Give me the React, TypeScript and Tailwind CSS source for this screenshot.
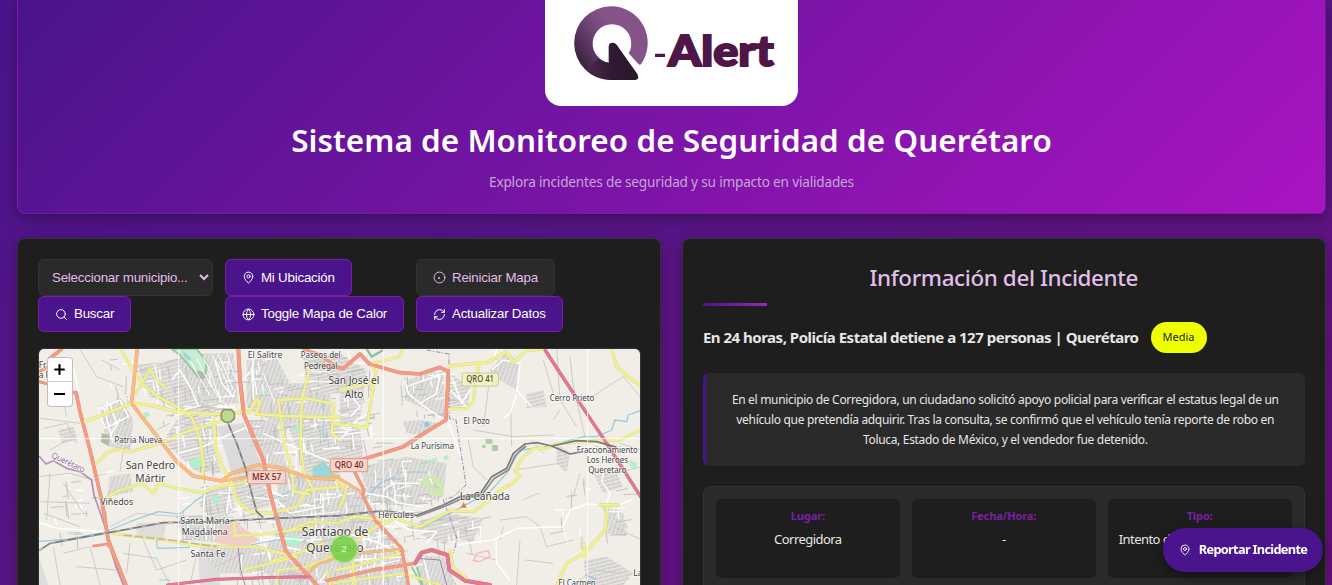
import React from "react";
import { Circle, Globe, MapPin, Plus, RefreshCw, Search } from "lucide-react";

type Road = { d: string; c: string; w: number };

const YELLOW = "#f1f193";
const YELLOW_CASE = "#d6d67c";
const ORANGE = "#fabb84";
const RED = "#f59c84";
const PINK = "#e27a92";

const roadsWest: Road[] = [
  { d: "M272 27 L300 75 L340 135 L385 170 L440 200 L485 232 L510 295 L520 375 L518 408", c: YELLOW, w: 9 },
  { d: "M360 85 L375 115 L410 148 M318 160 L362 85", c: YELLOW, w: 8 },
  { d: "M162 246 L225 222 L308 188 L380 200 L450 218 L560 222 L660 215 L678 178 L690 185 L678 222 L760 228 L930 232", c: YELLOW, w: 10 },
  { d: "M192 376 L235 335 L265 328 L300 336 L395 308 L470 275 L560 248 L590 232", c: YELLOW, w: 9 },
  { d: "M220 478 L270 450 L335 430 L370 460 L388 430 L440 445 L520 458 L560 440 L640 428 L655 415", c: YELLOW, w: 9 },
  { d: "M552 240 L558 330 L580 385 L605 430 L620 480 L660 515 L720 520 L800 500 L830 450 L930 440", c: YELLOW, w: 9 },
  { d: "M838 90 L815 180 L812 320 L822 400 L845 440 M745 180 L830 175 L912 192 L905 280 L930 300 M745 180 L765 320 L785 390 L792 455 L838 462", c: YELLOW, w: 9 },
  { d: "M248 580 L400 600 L520 620 L680 620 L800 650 L640 690", c: YELLOW, w: 8 },
  { d: "M612 545 L615 588 L700 582 L780 572 L850 560 M740 735 L745 690 L830 680 L930 640", c: YELLOW, w: 8 },
  { d: "M780 570 L840 545 L930 550 M720 665 L800 640 L880 610 M900 735 L890 690", c: YELLOW, w: 8 },
  { d: "M322 27 L312 120 L305 190 L370 275 L440 365 L490 408 L575 423 L605 400 L685 375 L745 382 L840 414 L930 418", c: ORANGE, w: 11 },
  { d: "M575 423 L650 412 M835 700 L865 670 L930 650", c: ORANGE, w: 9 },
  { d: "M27 125 L85 140 L138 160 M27 95 L55 80", c: RED, w: 9 },
  { d: "M60 55 L95 27 M138 158 L150 215 L180 330 L215 480 L235 600 L258 660 L288 735", c: RED, w: 11 },
  { d: "M190 618 L232 612 L252 640", c: RED, w: 7 },
  { d: "M625 27 L630 120 L642 225 L700 360 L720 460 L745 550 L768 635 L838 710 L860 735", c: RED, w: 12 },
  { d: "M820 27 L860 40 L930 85", c: RED, w: 8 },
  { d: "M412 735 L560 718 L740 712 L840 710", c: PINK, w: 9 },
];

const roadsEast: Road[] = [
  { d: "M100 70 L180 50 L187 27 M95 75 L108 95 L80 262 L-20 250 M0 148 L95 130", c: YELLOW, w: 9 },
  { d: "M328 78 L400 70 L440 68 L500 35 L520 68 L560 30 L615 27", c: YELLOW, w: 10 },
  { d: "M418 72 L408 120 L400 185 L380 205 L325 208", c: YELLOW, w: 9 },
  { d: "M815 27 L830 80 L870 115 L905 138", c: YELLOW, w: 10 },
  { d: "M905 268 L840 300 L760 302 L650 312 L620 325 L580 325 L545 355 L525 395 L540 405 L520 430 L480 450 L450 480 L400 515 L330 512 L240 560 L165 535 L100 565 L0 640", c: YELLOW, w: 9 },
  { d: "M-10 420 L20 450 L0 500 M0 545 L45 530 L130 540 M-10 690 L40 680 L180 640 M35 640 L45 735", c: YELLOW, w: 9 },
  { d: "M780 495 L835 495 M803 495 L795 570 L740 635 L680 670 L650 735 M730 612 L735 650", c: YELLOW, w: 10 },
  { d: "M330 630 L340 680 L380 715 M-20 730 L190 700 L300 735", c: YELLOW, w: 8 },
  { d: "M-20 405 L30 435 L70 460", c: ORANGE, w: 9 },
  { d: "M0 650 L60 638 L185 628", c: ORANGE, w: 9 },
  { d: "M-60 75 L10 85 L60 42 L88 72 L180 98 L240 102 L300 82 L325 95 L318 240 L260 275 L190 320 L70 358 L0 360", c: RED, w: 11 },
  { d: "M45 398 L72 450 L68 465 L105 540 L185 625 L205 735", c: RED, w: 10 },
  { d: "M615 30 L720 190 L800 310 L905 475", c: PINK, w: 10 },
  { d: "M-40 722 L100 690 L225 670 L245 638", c: RED, w: 10 },
  { d: "M225 670 L245 638 L275 630 L322 645 L328 690 L375 722 L450 735", c: PINK, w: 12 },
];

const whiteWest =
  "M205 205 L270 180 L295 230 L225 265 Z M222 205 L250 310 M240 192 L260 250 M130 80 L145 155 M270 235 L240 290 M450 90 L485 150 L505 200 M450 90 L425 120 M445 340 L520 320 L560 300 L650 262 M555 60 L575 130 L610 170 M668 27 L670 180 M640 120 L660 95 M700 280 L790 320 L900 365 M27 548 L80 565 L220 575 M525 440 L520 520 L530 600 M730 340 L800 335 M600 440 L590 520 M880 460 L878 560 L850 600 M700 590 L820 600 M760 620 L860 640 M650 470 L740 480 L780 520 L880 500 M700 440 L760 470 M860 735 L890 700";
const whiteEast =
  "M200 140 L240 125 L300 105 L290 160 L240 190 L205 160 Z M240 190 L305 235 M335 110 L365 190 L390 150 M330 150 L380 200 M455 90 L490 60 L540 70 L530 150 L575 200 M530 165 L510 220 L490 235 M320 235 L345 300 L360 345 M790 400 L785 425 L810 460 L800 490 M345 615 L460 600 L530 565 L670 560 L690 510 L740 492 L780 495 M835 495 L875 480 M468 600 L470 670 L510 720 M130 450 L160 430 L240 430 M75 460 L140 470 L180 490 L250 500 M160 540 L210 570 L290 575 L260 610 M20 580 L120 610 L180 640 M40 660 L200 650 M120 570 L100 690 M75 590 L60 700 M250 650 L270 735 M460 60 L470 27 M0 300 L50 240 L90 220 M20 150 L60 200 L30 230";

const minorWest =
  "M60 60 L90 150 L65 190 M95 70 L130 85 M150 27 L200 110 L280 140 M215 60 L270 90 M30 235 L150 250 M40 265 L110 250 L140 310 M60 330 L130 290 M27 410 L120 400 L190 420 M60 400 L50 540 M100 430 L160 520 M27 485 L180 490 M40 520 L150 560 M70 620 L90 735 M100 640 L180 620 L210 735 M140 680 L260 690 M280 640 L380 655 L420 735 M300 610 L290 700 M330 290 L280 330 L270 395 M190 410 L230 400 M420 250 L380 270 M240 560 L320 520 L450 530 M340 600 L380 690 L470 660 M500 640 L480 735 M560 680 L640 640 M690 630 L700 735 M660 320 L780 300 M100 180 L110 230";
const minorEast =
  "M450 110 L430 260 M400 270 L520 290 L640 285 M512 210 L515 320 M610 60 L640 160 M650 27 L660 180 L710 260 M690 50 L700 140 L735 290 M660 210 L640 240 M575 300 L610 340 M385 300 L400 380 L440 420 M480 540 L560 530 L600 560 M550 480 L580 465 L600 460 M540 600 L530 735 M555 660 L640 670 M380 640 L470 660 M600 560 L620 620 L700 600 M720 400 L700 470 M840 310 L905 330 M830 400 L905 380 M820 560 L905 600 M700 735 L760 690 L840 700 M740 180 L850 110 L900 170 M520 390 L660 370 M490 560 L480 600";

const urbanWest = [
  "M205 200 L275 175 L310 240 L300 330 L235 320 Z",
  "M320 75 L440 60 L520 130 L545 220 L450 210 L360 170 Z",
  "M440 60 L480 40 L610 40 L625 190 L520 190 Z",
  "M450 225 L545 230 L550 320 L575 400 L500 395 L450 350 L400 300 Z",
  "M240 410 L300 400 L310 455 L230 470 Z",
  "M520 450 L600 440 L620 515 L550 535 L510 500 Z",
  "M650 60 L740 55 L780 130 L900 130 L905 250 L830 280 L735 250 L650 200 Z",
  "M820 50 L930 40 L930 160 L830 165 Z",
  "M660 240 L740 240 L770 380 L700 370 L650 280 Z",
  "M610 390 L700 380 L720 500 L640 515 L605 440 Z",
  "M740 390 L930 420 L930 735 L720 735 L700 640 L745 560 Z",
  "M770 250 L930 250 L930 415 L830 400 Z",
  "M435 525 L610 530 L610 610 L470 600 Z",
  "M85 270 L130 260 L145 300 L95 310 Z",
  "M500 610 L740 630 L760 700 L560 700 Z",
];
const urbanEast = [
  "M0 40 L80 90 L60 240 L0 260 Z",
  "M200 120 L310 85 L315 235 L240 200 L195 180 Z",
  "M330 100 L390 140 L385 195 L330 200 Z",
  "M450 90 L500 35 L540 70 L530 150 L460 110 Z",
  "M560 160 L610 150 L620 200 L560 205 Z",
  "M60 380 L200 350 L320 370 L310 470 L220 500 L90 490 Z",
  "M0 270 L60 260 L70 350 L0 355 Z",
  "M0 430 L60 450 L130 560 L180 640 L200 735 L0 735 Z",
  "M190 560 L320 520 L430 535 L400 600 L290 605 Z",
  "M790 500 L850 520 L860 590 L800 580 Z",
  "M650 310 L690 340 L680 400 L650 370 Z",
  "M230 645 L310 650 L350 735 L240 735 Z",
  "M730 660 L800 650 L880 700 L850 735 L740 735 Z",
  "M190 245 L240 240 L300 250 L250 285 L200 280 Z",
  "M760 400 L830 400 L850 440 L790 460 Z",
];

// Scattered side streets: [left, top, width, height, count] per neighbourhood.
const blocks: number[][] = [
  [210, 60, 400, 160, 70],
  [400, 220, 160, 180, 40],
  [640, 50, 290, 340, 110],
  [620, 400, 310, 330, 110],
  [930, 30, 110, 330, 40],
  [930, 420, 200, 310, 70],
  [1000, 360, 240, 140, 45],
  [1110, 90, 140, 140, 30],
  [1120, 530, 240, 80, 30],
  [440, 430, 170, 170, 40],
  [1560, 380, 230, 220, 22],
  [40, 400, 190, 200, 22],
];

function sideStreets() {
  let seed = 7;
  const next = () => {
    seed = (seed * 16807) % 2147483647;
    return seed / 2147483647;
  };
  const parts: string[] = [];
  for (const [x, y, w, h, n] of blocks) {
    for (let i = 0; i < n; i++) {
      const px = x + next() * w;
      const py = y + next() * h;
      const angle = -0.25 + (i % 2) * 1.57 + next() * 0.3;
      const len = 14 + next() * 40;
      parts.push(`M${px.toFixed(0)} ${py.toFixed(0)}l${(Math.cos(angle) * len).toFixed(0)} ${(Math.sin(angle) * len).toFixed(0)}`);
    }
  }
  return parts;
}

const streets = sideStreets();
const greyStreets = streets.filter((_, i) => i % 3 !== 0).join("");
const whiteStreets = streets.filter((_, i) => i % 3 === 0).join("");

const labels: { t: string; x: number; y: number; w: number; s: number }[] = [
  { t: "El Salitre", x: 705, y: 53, w: 104, s: 25 },
  { t: "Paseos del", x: 872, y: 55, w: 120, s: 24 },
  { t: "Pedregal", x: 872, y: 86, w: 100, s: 24 },
  { t: "San José el", x: 972, y: 132, w: 153, s: 30 },
  { t: "Alto", x: 972, y: 173, w: 56, s: 30 },
  { t: "Patria Nueva", x: 325, y: 308, w: 143, s: 24 },
  { t: "San Pedro", x: 361, y: 386, w: 148, s: 30 },
  { t: "Mártir", x: 361, y: 426, w: 90, s: 30 },
  { t: "Viñedos", x: 260, y: 494, w: 99, s: 27 },
  { t: "Santa María", x: 525, y: 551, w: 148, s: 26 },
  { t: "Magdalena", x: 524, y: 585, w: 138, s: 26 },
  { t: "Santa Fe", x: 534, y: 651, w: 105, s: 26 },
  { t: "Santiago de", x: 915, y: 588, w: 200, s: 36 },
  { t: "Querétaro", x: 915, y: 636, w: 172, s: 36 },
  { t: "Cerro Prieto", x: 1626, y: 183, w: 134, s: 24 },
  { t: "El Pozo", x: 1340, y: 253, w: 79, s: 24 },
  { t: "La Purísima", x: 1207, y: 326, w: 130, s: 25 },
  { t: "Fraccionamiento", x: 1732, y: 338, w: 183, s: 24 },
  { t: "Los Heroes", x: 1732, y: 369, w: 124, s: 24 },
  { t: "Queretaro", x: 1732, y: 400, w: 115, s: 24 },
  { t: "La Cañada", x: 1364, y: 480, w: 150, s: 30 },
  { t: "Hércules", x: 1098, y: 534, w: 107, s: 26 },
  { t: "El Carmen", x: 1641, y: 739, w: 112, s: 25 },
  { t: "La", x: 1824, y: 707, w: 28, s: 25 },
];

function Roads({ roads }: { roads: Road[] }) {
  return (
    <g fill="none" strokeLinejoin="round" strokeLinecap="round">
      {roads.map((r, i) => (
        <path key={`c${i}`} d={r.d} stroke={r.c === YELLOW ? YELLOW_CASE : r.c === ORANGE ? "#dba56c" : r.c === RED ? "#e2856c" : "#cd6079"} strokeWidth={r.w} />
      ))}
      {roads.map((r, i) => (
        <path key={i} d={r.d} stroke={r.c} strokeWidth={r.w - 2} />
      ))}
    </g>
  );
}

function Shield({ x, y, w, text, yellow }: { x: number; y: number; w: number; text: string; yellow?: boolean }) {
  return (
    <g>
      <rect x={x} y={y} width={w} height={39} rx={5} fill={yellow ? "#f1f1c6" : "#f6d3cb"} stroke={yellow ? "#c8c88e" : "#dd9c90"} strokeWidth={3} />
      <text x={x + w / 2} y={y + 28} fontSize={24} textAnchor="middle" fill={yellow ? "#50501e" : "#7a2018"} textLength={w - 26} lengthAdjust="spacingAndGlyphs" fontWeight={500}>
        {text}
      </text>
    </g>
  );
}

function CityMap() {
  return (
    <svg viewBox="27 27 1803 711" className="block h-[237px] w-[601px]" fontFamily="'Noto Sans', sans-serif">
      <defs>
        <pattern id="streetsA" width="15" height="11" patternUnits="userSpaceOnUse" patternTransform="rotate(-14)">
          <rect width="15" height="11" fill="#e0dedb" />
          <path d="M0 1H15M2 0V11M9 1V7" stroke="#c9c8c6" strokeWidth="2.2" />
          <path d="M0 7H15" stroke="#f4f3f1" strokeWidth="1.6" />
        </pattern>
        <pattern id="streetsB" width="12" height="16" patternUnits="userSpaceOnUse" patternTransform="rotate(19)">
          <rect width="12" height="16" fill="#e0dedb" />
          <path d="M0 2H12M3 0V16M3 10H12" stroke="#c8c7c5" strokeWidth="2.2" />
          <path d="M8 0V16" stroke="#f4f3f1" strokeWidth="1.6" />
        </pattern>
      </defs>
      <rect x="27" y="27" width="1803" height="711" fill="#f1eee8" />

      <g>
        <path d="M320 548 H410 L400 600 L320 585 Z M505 630 L570 625 L570 735 H510 Z M27 650 L55 735 H27 Z" fill="#dedddc" />
        <path d="M790 400 L900 400 L900 470 L800 480 Z" fill="#dbdbdb" />
      </g>
      {urbanWest.map((d, i) => (
        <path key={i} d={d} fill={i % 2 ? "url(#streetsA)" : "url(#streetsB)"} />
      ))}
      <g transform="translate(930 0)">
        {urbanEast.map((d, i) => (
          <path key={i} d={d} fill={i % 2 ? "url(#streetsB)" : "url(#streetsA)"} />
        ))}
      </g>
      <path d={greyStreets} fill="none" stroke="#bfbdba" strokeWidth="2.6" />
      <path d={whiteStreets} fill="none" stroke="#fdfdfc" strokeWidth="4" />
      <path d="M562 260 L640 248 L692 368 L605 400 Z" fill="#dbdbdb" />
      <path d="M555 570 L615 545 L690 600 L640 620 L560 610 Z" fill="#f0cfc9" />

      <g>
        <path d="M425 27 L500 27 L530 65 L525 110 L508 115 L480 80 L450 45 Z" fill="#c9ecd0" stroke="#8cc79a" strokeWidth="5" />
        <path d="M455 30 L480 50 L488 68 L465 55 Z" fill="#9fd4e2" />
        <path d="M478 362 L512 345 L520 375 L490 388 Z M545 465 L565 468 L562 490 L550 492 Z M765 590 L800 582 L818 605 L790 620 L765 610 Z M340 220 l15 -5 4 12 -14 6z M795 260 l14 0 0 18 -14 0z M700 150 l10 10 -8 10z" fill="#b2f0cd" />
        <path d="M850 385 L880 368 L905 395 L905 408 L850 408 Z" fill="#9fd6dd" stroke="#92dcb0" strokeWidth="4" />
        <path d="M215 280 L240 285 L235 318 L212 305 Z M500 90 l26 8 -8 20 -18 -6z" fill="#b4b9a5" />
        <path d="M1170 430 L1190 400 L1210 450 Z M1190 455 L1235 440 L1240 470 L1200 465 Z M1195 405 L1225 415 L1245 445 L1222 440 Z" fill="#cdeab0" />
        <path d="M1367 295 h20 v16 h-20z M1386 315 h18 v18 h-18z M1357 315 h9 v9 h-9z" fill="#a9cf9f" />
        <path d="M1190 360 l30 -6 2 8 -30 6z M1240 350 l14 -5 3 12 -14 4z M1170 380 l8 0 0 14 -8 0z M1800 360 l22 10 -4 18 -20 -10z M1115 180 l6 12 -8 8z" fill="#b8efc8" />
        <path d="M1183 250 q8 -12 14 0 q2 12 -7 12 q-9 0 -7 -12z" fill="#90c8e0" />
        <path d="M1010 27 L1025 50 L1060 30" fill="none" stroke="#8fbf98" strokeWidth="7" />
        <path d="M1145 680 L1175 735 M1160 680 L1178 735" stroke="#9cc79f" strokeWidth="6" />
      </g>

      <g fill="none" stroke="#c6c4c1" strokeWidth="2.5" strokeLinejoin="round">
        <path d={minorWest} />
        <path d={minorEast} transform="translate(930 0)" />
      </g>
      <g fill="none" stroke="#98cbdd" strokeWidth="3.5" strokeLinejoin="round">
        <path d="M27 604 L110 598 L220 578 L300 545 L385 515 L450 522 L500 480 L560 440" />
        <path d="M380 600 L382 625 L480 622 M650 470 L720 480 L780 455 M388 720 L420 720 M660 615 L740 600 M878 180 L880 290" />
        <path d="M1180 560 L1260 520 L1380 455 L1430 400 L1470 330 L1540 322 L1660 290 L1700 290 L1745 270 L1755 240 L1790 245 L1795 225 L1830 212" strokeWidth="4" />
        <path d="M1000 480 L1050 430 L1095 410 M1665 705 L1700 718" strokeWidth="5" />
      </g>
      <g fill="none" stroke="#fff" strokeWidth="4.5" strokeLinejoin="round">
        <path d={whiteWest} />
        <path d={whiteEast} transform="translate(930 0)" />
      </g>
      <g fill="none" stroke="#fff" strokeWidth="3">
        <path d="M480 60 Q510 120 540 165 M500 55 Q540 140 580 190 M520 50 Q550 110 560 155 Q575 185 590 165 M545 45 Q585 100 600 160 Q610 180 615 150 M565 42 L610 150 M590 40 L618 120" />
        <path d="M830 95 H900 M840 125 H920 M700 100 L735 190 M940 610 L1100 580 M960 640 L1110 610 M980 690 L1110 660 M1000 580 L1020 735 M1050 575 L1060 735 M960 680 L970 735 M760 650 L830 690 M850 480 L930 470 M790 530 L930 515 M850 440 L860 580" />
      </g>
      <path d="M1340 640 L1375 632 L1380 650 L1350 665 L1330 662 Z" fill="none" stroke="#f7b5c5" strokeWidth="4" />

      <g fill="none" stroke="#a383ad" strokeLinejoin="round">
        <path d="M27 348 L48 372 L70 362 L110 385 L150 395 L185 420 L192 465 L208 510 L225 560 L240 620 L258 680 L280 735" strokeWidth="5" opacity="0.85" />
        <path d="M1190 30 L1257 42 L1258 235 L1278 240 L1290 320 L1300 380 L1308 435 L1270 470 L1240 480 L1262 540 L1282 600 L1270 640" strokeWidth="3" strokeDasharray="14 5 4 5" />
        <path d="M624 615 L632 690 L645 735 M1160 655 L1230 660 L1250 735" strokeWidth="3" />
      </g>

      <Roads roads={roadsWest} />
      <g transform="translate(930 0)">
        <Roads roads={roadsEast} />
      </g>
      <path d="M280 585 L420 600 L560 620" fill="none" stroke="#c8b890" strokeWidth="5" strokeDasharray="26 8" />

      <g fill="none" strokeLinejoin="round">
        <path d="M27 632 L60 610 L170 590 L290 568 L400 548 L520 546 L720 536 L930 527 L1060 512 L1160 526 L1240 495 L1290 470 L1350 462 L1385 410 L1430 385 L1450 340 L1485 312 L1520 308 L1565 318 L1620 342 L1660 335 M1565 318 L1640 302 L1700 305 L1760 322" stroke="#7b7b7b" strokeWidth="5" />
        <path d="M27 632 L60 610 L170 590 L290 568 L400 548 L520 546 L720 536 L930 527 L1060 512 L1160 526" stroke="#c4c4c4" strokeWidth="3" strokeDasharray="14 26" />
        <path d="M1160 530 L1245 499 L1295 476 L1355 466 L1392 416 L1436 389 L1456 346 L1488 318" stroke="#8b8b8b" strokeWidth="5" />
        <path d="M592 245 L620 310 L645 380 L665 460 L680 515 L700 533" stroke="#777" strokeWidth="5" />
        <path d="M592 245 L620 310 L645 380 L665 460 L680 515" stroke="#bbb" strokeWidth="3" strokeDasharray="10 20" />
      </g>

      <path d="M446 27 V738 M1060 27 V738 M1673 27 V738 M27 296 H1830" stroke="#fff" strokeWidth="3" opacity="0.85" />

      <g fill="#42423f" stroke="#fff" strokeWidth="5" strokeOpacity="0.65" paintOrder="stroke" strokeLinejoin="round">
        <text x="26" y="84" fontSize="25">Fra</text>
        <text x="26" y="115" fontSize="25">a P</text>
        {labels.map((l, i) => (
          <text key={i} x={l.x} y={l.y} fontSize={l.s} textAnchor="middle" textLength={l.w} lengthAdjust="spacingAndGlyphs">
            {l.t}
          </text>
        ))}
        <text transform="translate(62 352) rotate(25)" fontSize="25" fill="#8d6b9c" textLength="108">
          Querétaro
        </text>
      </g>
      <Shield x={653} y={392} w={114} text="MEX 57" />
      <Shield x={901} y={356} w={112} text="QRO 40" />
      <Shield x={1296} y={99} w={109} text="QRO 41" yellow />
      <path d="M1301 487 L1310 503 H1292 Z" fill="#d08333" />

      <path d="M582 209 H604 L613 219 V236 L602 246 H584 L574 236 V219 Z" fill="#b5d68a" fillOpacity="0.8" stroke="#8a9668" strokeWidth="5" />
      <circle cx="942" cy="627" r="45" fill="#b5e28c" fillOpacity="0.6" />
      <circle cx="942" cy="627" r="39" fill="#6ecc39" fillOpacity="0.75" />
      <text x="942" y="637" fontSize="29" textAnchor="middle" fill="#e8f5df" fontFamily="'Liberation Sans', sans-serif" fontWeight="500">
        2
      </text>
    </svg>
  );
}

function Logo() {
  return (
    <svg viewBox="75 0 759 318" className="block h-[106px] w-[253px]">
      <defs>
        <linearGradient id="ring" x1="0.1" y1="0.8" x2="0.8" y2="0.3">
          <stop offset="0" stopColor="#3c2140" />
          <stop offset="0.45" stopColor="#6d4474" />
          <stop offset="0.75" stopColor="#875489" />
          <stop offset="1" stopColor="#85528a" />
        </linearGradient>
        <linearGradient id="needle" x1="0" y1="0" x2="1" y2="0">
          <stop offset="0" stopColor="#49294e" />
          <stop offset="0.5" stopColor="#301a33" />
          <stop offset="1" stopColor="#28172a" />
        </linearGradient>
      </defs>
      <path d="M273 19 A110 110 0 0 1 364 191 Q360 197 355 192 L326 160 A58 58 0 1 0 266 188 L273 240 A110 110 0 0 1 273 19 Z" fill="url(#ring)" />
      <path d="M200 212 L235 175 Q250 187 266 188 V138 Q267 128 278 128 Q285 128 290 134 L352 222 Q360 238 346 240 H273 Q230 238 200 212 Z" fill="url(#needle)" />
      <g fontFamily="Lato, sans-serif" fontWeight="900" fill="#4f1648" stroke="#4f1648" strokeWidth="6">
        <path d="M405 161 H435 V171 H405 Z" stroke="none" />
        <text x="445" y="197" fontSize="126" textLength="316" lengthAdjust="spacingAndGlyphs">
          Alert
        </text>
      </g>
    </svg>
  );
}

function TargetIcon() {
  return (
    <span className="relative flex size-[13px] items-center justify-center">
      <Circle size={13} strokeWidth={1.8} />
      <span className="absolute size-[2px] rounded-full bg-current" />
    </span>
  );
}

function ToolButton({ icon, children, muted }: { icon: React.ReactNode; children: React.ReactNode; muted?: boolean }) {
  const tone = muted ? "border-[#333333] bg-[#2a2a2a] text-[#e1bee7]" : "border-[#7b1fa2] bg-[#4a148c] text-white";
  return (
    <button className={`flex w-fit items-center gap-[6px] rounded-md border px-4 whitespace-nowrap ${tone}`}>
      {icon}
      <span>{children}</span>
    </button>
  );
}

function Fact({ label, children }: { label: string; children: React.ReactNode }) {
  return (
    <div className="h-[79px] rounded-md bg-[#1e1e1e] px-[11px] pt-[9px] text-center">
      <div className="text-[11px] leading-4 font-bold tracking-[-0.1px] text-[#7b1fa2]">{label}</div>
      <div className="mt-[6px] text-[13px] leading-[18px] tracking-[-0.55px] whitespace-nowrap text-[#e6e6e6]">{children}</div>
    </div>
  );
}

export default function App() {
  return (
    <div className="h-[585px] overflow-hidden bg-linear-to-br from-[#4a148c] to-[#6a1080] pr-[6.4px] pl-[17.4px] font-['Noto_Sans',sans-serif]">
      <header className="flex h-[214px] flex-col items-center rounded-b-lg border border-t-0 border-[#7b1fa2]/70 bg-[linear-gradient(135deg,#4a148c_0%,#aa14c1_100%)] shadow-[0_4px_16px_rgba(0,0,0,0.35)]">
        <div className="h-[106px] w-[253px] overflow-hidden rounded-b-2xl bg-white">
          <Logo />
        </div>
        <h1 className="mt-[12px] text-[31.4px] leading-[44px] font-semibold tracking-[0.06px] whitespace-nowrap text-white">
          Sistema de Monitoreo de Seguridad de Querétaro
        </h1>
        <p className="mt-[10px] text-[13.6px] leading-5 tracking-[-0.18px] whitespace-nowrap text-[#c3a6d6]">Explora incidentes de seguridad y su impacto en vialidades</p>
      </header>

      <main className="mt-6 grid grid-cols-2 gap-[20.8px]">
        <section className="h-[400px] rounded-lg border border-[#333333] bg-[#1e1e1e] px-[19.6px] pt-5 shadow-[0_4px_16px_rgba(0,0,0,0.3)]">
          <div className="grid grid-cols-[175px_179px_146px] grid-rows-[37px_36px] gap-x-3 font-['Liberation_Sans',sans-serif] text-[13.3px] tracking-[-0.2px]">
            <div className="flex items-center justify-between rounded-md border border-[#333333] bg-[#2a2a2a] pr-[3px] pl-[13px] text-[#e1bee7]">
              <span className="whitespace-nowrap">Seleccionar municipio...</span>
              <svg viewBox="0 0 10 7" className="h-[7px] w-[10px]" fill="none" stroke="currentColor" strokeWidth="2">
                <path d="M1 1 L5 5 L9 1" />
              </svg>
            </div>
            <ToolButton icon={<MapPin size={13} strokeWidth={1.8} />}>Mi Ubicación</ToolButton>
            <ToolButton muted icon={<TargetIcon />}>Reiniciar Mapa</ToolButton>
            <ToolButton icon={<Search size={13} strokeWidth={1.8} />}>Buscar</ToolButton>
            <ToolButton icon={<Globe size={13} strokeWidth={1.8} />}>Toggle Mapa de Calor</ToolButton>
            <ToolButton icon={<RefreshCw size={13} strokeWidth={1.8} />}>Actualizar Datos</ToolButton>
          </div>
          <div className="relative mt-4 h-[300px] w-[603px] overflow-hidden rounded-md border border-[#333333]">
            <CityMap />
            <div className="absolute top-[8px] left-[8px] flex w-[26px] flex-col rounded-sm border border-black/25 bg-white text-black">
              <span className="flex h-6 items-center justify-center border-b border-[#ccc]">
                <Plus size={15} strokeWidth={3.4} />
              </span>
              <span className="flex h-6 items-center justify-center">
                <span className="h-[2px] w-[11px] bg-black" />
              </span>
            </div>
          </div>
        </section>

        <section className="h-[400px] rounded-lg border border-[#333333] bg-[#1e1e1e] px-5 pt-[19px] shadow-[0_4px_16px_rgba(0,0,0,0.3)]">
          <h2 className="text-center text-[22.4px] leading-[40px] font-medium tracking-[-0.36px] text-[#e1bee7]">Información del Incidente</h2>
          <div className="mt-[5px] h-[3px] w-16 bg-linear-to-r from-[#4a148c] to-[#9c27b0]" />
          <div className="mt-4 flex h-[31px] items-center gap-3">
            <h3 className="text-[15px] font-bold tracking-[-0.49px] whitespace-nowrap text-[#e6e6e6]">
              En 24 horas, Policía Estatal detiene a 127 personas | Querétaro
            </h3>
            <span className="flex h-[31px] w-14 items-center justify-center rounded-2xl bg-[#eeff00] text-[11px] text-[#1e1e1e]">Media</span>
          </div>
          <p className="mt-5 h-[93px] rounded-md border-l-[3px] border-[#4a148c] bg-[#2a2a2a] pt-[17px] text-center text-[12px] leading-5 tracking-[-0.32px] whitespace-nowrap text-[#e6e6e6]">
            En el municipio de Corregidora, un ciudadano solicitó apoyo policial para verificar el estatus legal de un
            <br />
            vehículo que pretendía adquirir. Tras la consulta, se confirmó que el vehículo tenía reporte de robo en
            <br />
            Toluca, Estado de México, y el vendedor fue detenido.
          </p>
          <div className="mt-5 grid h-[160px] grid-cols-3 gap-3 rounded-lg border border-[#333333] bg-[#2a2a2a] p-3">
            <Fact label="Lugar:">Corregidora</Fact>
            <Fact label="Fecha/Hora:">-</Fact>
            <Fact label="Tipo:">
              <span className="block text-left">Intento de robo</span>
            </Fact>
          </div>
        </section>
      </main>

      <button className="fixed right-[9px] bottom-[13px] flex h-11 w-40 items-center justify-center gap-2 rounded-full bg-[#4a148c] text-[12.8px] font-bold tracking-[-0.7px] whitespace-nowrap text-white shadow-[0_4px_12px_rgba(0,0,0,0.4)]">
        <MapPin size={12} strokeWidth={1.8} />
        <span>Reportar Incidente</span>
      </button>
    </div>
  );
}
